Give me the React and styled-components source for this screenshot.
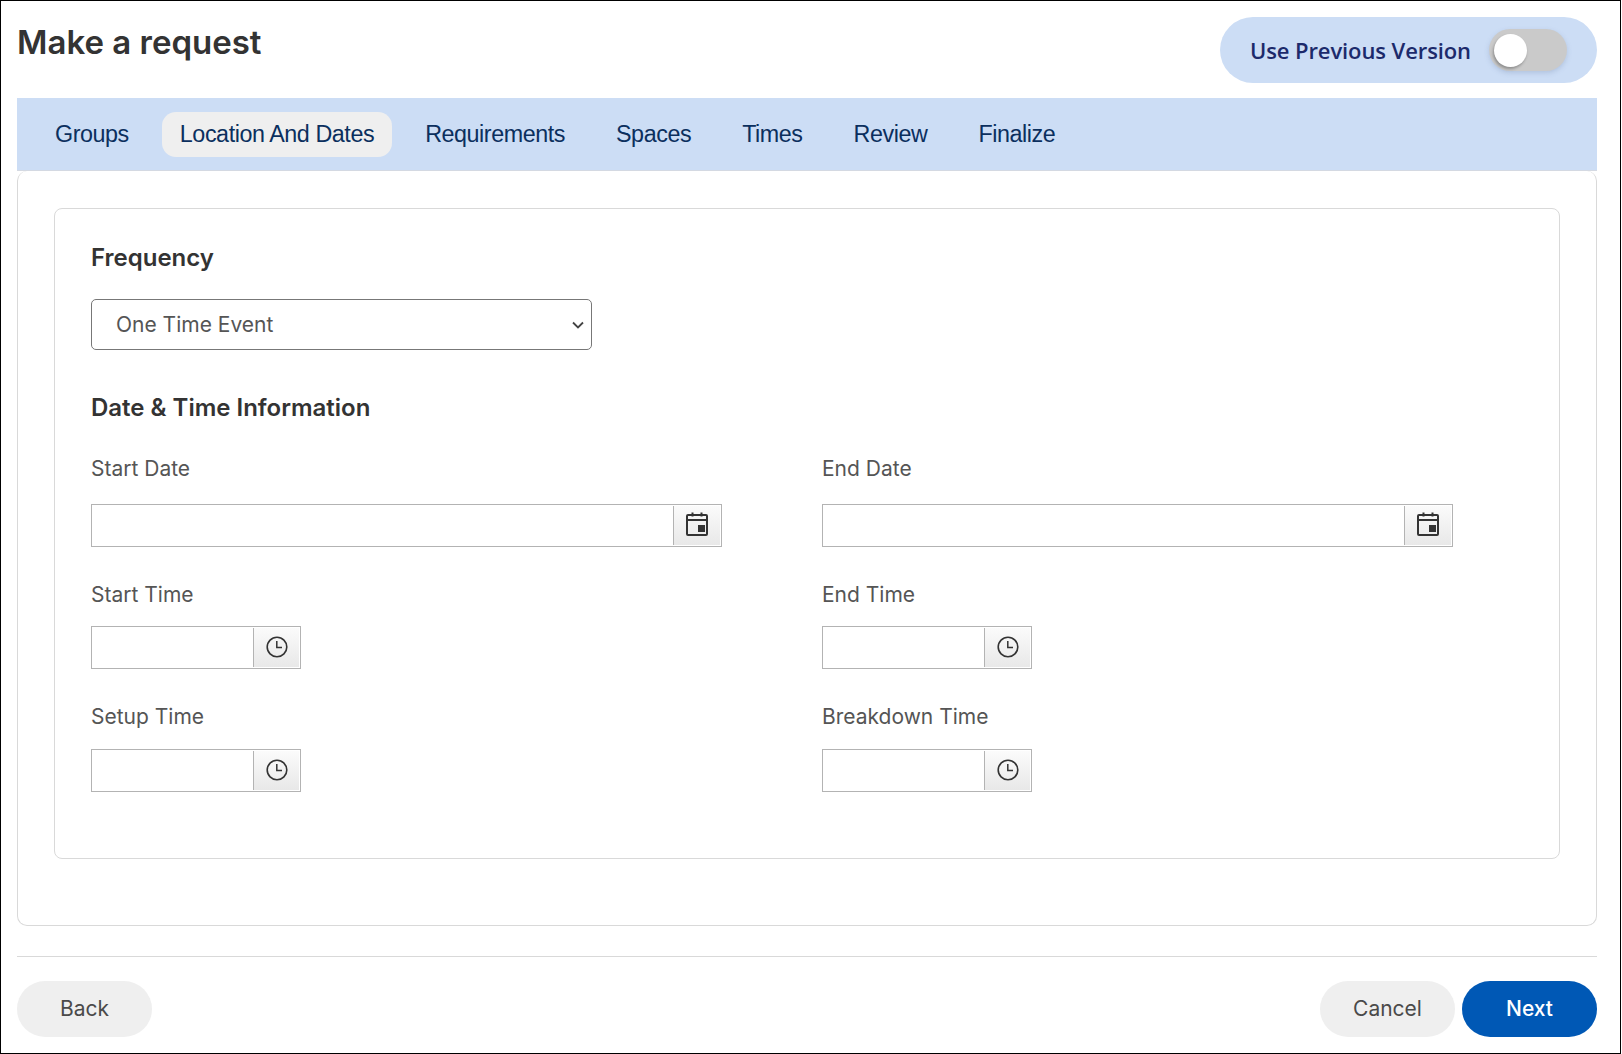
import React from 'react'
import styled, { createGlobalStyle } from 'styled-components'

const GlobalStyle = createGlobalStyle`
  html, body {
    margin: 0;
    padding: 0;
    background: #fff;
  }
  * {
    box-sizing: border-box;
  }
`

const Page = styled.div`
  width: 1621px;
  height: 1054px;
  border: 1px solid #000;
  padding: 16px 23px 0 16px;
  font-family: Inter, "Liberation Sans", sans-serif;
  color: #333;
  overflow: hidden;
`

const Header = styled.header`
  display: flex;
  justify-content: space-between;
  align-items: flex-start;
  height: 66px;
  margin-bottom: 15px;
`

const Title = styled.h1`
  margin: 0;
  font-size: 33px;
  line-height: 51px;
  font-weight: 600;
  color: #333;
`

const VersionPill = styled.div`
  display: flex;
  align-items: center;
  width: 377px;
  height: 66px;
  padding-left: 30px;
  gap: 18px;
  border-radius: 33px;
  background: #ccddf5;
`

const VersionLabel = styled.span`
  font-family: "Open Sans", sans-serif;
  font-size: 22px;
  font-weight: 600;
  letter-spacing: -0.1px;
  color: #1c2a6b;
  white-space: nowrap;
`

const Toggle = styled.span`
  display: flex;
  align-items: center;
  width: 78px;
  height: 42px;
  padding-left: 5px;
  border-radius: 21px;
  background: #cacaca;
  box-shadow: 0 2px 5px rgba(100, 120, 160, 0.25);
`

const Knob = styled.span`
  width: 33px;
  height: 33px;
  border-radius: 50%;
  background: #fff;
  box-shadow: -1px 2px 3px rgba(0, 0, 0, 0.3);
`

const TabBar = styled.nav`
  display: flex;
  align-items: center;
  gap: 15px;
  height: 73px;
  padding: 1px 20px 0;
  background: #ccddf5;
  border-bottom: 1px solid #d4d9e2;
`

const Tab = styled.div`
  height: 45px;
  padding: 0 18px;
  border-radius: 14px;
  font-family: "Liberation Sans", Arial, sans-serif;
  font-size: 23.3px;
  letter-spacing: -0.43px;
  line-height: 45px;
  color: #0b2f5e;
  background: ${(p) => (p.$active ? '#efefef' : 'transparent')};
`

const OuterCard = styled.section`
  height: 755px;
  padding: 37px 36px;
  border: 1px solid #d9d9d9;
  border-top: none;
  border-radius: 10px;
`

const InnerCard = styled.div`
  height: 651px;
  padding: 34px 36px;
  border: 1px solid #d9d9d9;
  border-radius: 8px;
`

const SectionTitle = styled.h2`
  margin: 0;
  font-size: 24px;
  line-height: 30px;
  font-weight: 600;
  color: #333;
`

const Select = styled.select`
  display: block;
  width: 501px;
  height: 51px;
  margin: 26px 0 43px;
  padding: 0 24px;
  border: 1px solid #777;
  border-radius: 5px;
  appearance: none;
  background: #fff url("data:image/svg+xml,%3Csvg xmlns='http://www.w3.org/2000/svg' width='12' height='8'%3E%3Cpath d='M1 1.5l5 5 5-5' fill='none' stroke='%23444' stroke-width='1.8'/%3E%3C/svg%3E") no-repeat right 7px center;
  font-family: Inter, sans-serif;
  font-size: 21px;
  color: #555;
`

const FieldGrid = styled.div`
  display: grid;
  grid-template-columns: 731px 631px;
  margin-top: 32px;
`

const Field = styled.div`
  display: flex;
  flex-direction: column;
  height: ${(p) => p.$height}px;
`

const Label = styled.label`
  font-size: 21px;
  line-height: 28px;
  margin-bottom: ${(p) => p.$gap}px;
  color: #555;
`

const InputGroup = styled.div`
  display: flex;
  width: ${(p) => (p.$wide ? '631px' : '210px')};
  height: 43px;
  border: 1px solid #b3b3b3;
  background: #fff;
`

const Input = styled.input`
  flex: 1;
  min-width: 0;
  border: none;
  outline: none;
  padding: 0 10px;
  background: transparent;
`

const Addon = styled.span`
  display: flex;
  align-items: center;
  justify-content: center;
  width: ${(p) => (p.$wide ? '47px' : '46px')};
  margin: 1px 1px 1px 0;
  padding-bottom: ${(p) => (p.$wide ? '3px' : '1px')};
  border-left: 1px solid #b3b3b3;
  background: linear-gradient(#fbfbfb, #e8e8e8);
`

const Footer = styled.footer`
  display: flex;
  justify-content: space-between;
  height: 81px;
  margin-top: 30px;
  padding-top: 24px;
  border-top: 1px solid #d9d9d9;
`

const ButtonRow = styled.div`
  display: flex;
  gap: 7px;
`

const Button = styled.button`
  width: 135px;
  height: 56px;
  padding: 0 0 2px;
  border: none;
  border-radius: 28px;
  font-family: Inter, sans-serif;
  font-size: 21px;
  font-weight: ${(p) => (p.$primary ? 500 : 400)};
  color: ${(p) => (p.$primary ? '#fff' : '#4a4a4a')};
  background: ${(p) => (p.$primary ? '#0058b5' : '#efefef')};
`

const CalendarIcon = () => (
  <svg width="22" height="24" viewBox="0 0 22 24" fill="none">
    <rect x="1" y="3" width="20" height="20" rx="1" stroke="#333" strokeWidth="2" />
    <path d="M1 8h20" stroke="#333" strokeWidth="2" />
    <path d="M6.5 0.5v4M15.5 0.5v4" stroke="#333" strokeWidth="2" />
    <rect x="12" y="13" width="7" height="7" fill="#333" />
  </svg>
)

const ClockIcon = () => (
  <svg width="22" height="22" viewBox="0 0 22 22" fill="none">
    <circle cx="11" cy="11" r="9.8" stroke="#333" strokeWidth="1.6" />
    <path d="M10.8 5v6.6h5.2" stroke="#333" strokeWidth="1.5" />
  </svg>
)

const tabs = ['Groups', 'Location And Dates', 'Requirements', 'Spaces', 'Times', 'Review', 'Finalize']

const rows = [
  { left: 'Start Date', right: 'End Date', wide: true, height: 126, gap: 21 },
  { left: 'Start Time', right: 'End Time', height: 122, gap: 17 },
  { left: 'Setup Time', right: 'Breakdown Time', height: 110, gap: 18 },
]

const DateField = ({ label, wide, height, gap }) => (
  <Field $height={height}>
    <Label $gap={gap}>{label}</Label>
    <InputGroup $wide={wide}>
      <Input type="text" aria-label={label} />
      <Addon $wide={wide}>{wide ? <CalendarIcon /> : <ClockIcon />}</Addon>
    </InputGroup>
  </Field>
)

export default function App() {
  return (
    <Page>
      <GlobalStyle />
      <Header>
        <Title>Make a request</Title>
        <VersionPill>
          <VersionLabel>Use Previous Version</VersionLabel>
          <Toggle>
            <Knob />
          </Toggle>
        </VersionPill>
      </Header>
      <TabBar>
        {tabs.map((tab) => (
          <Tab key={tab} $active={tab === 'Location And Dates'}>
            {tab}
          </Tab>
        ))}
      </TabBar>
      <OuterCard>
        <InnerCard>
          <SectionTitle>Frequency</SectionTitle>
          <Select defaultValue="One Time Event">
            <option>One Time Event</option>
          </Select>
          <SectionTitle>Date &amp; Time Information</SectionTitle>
          <FieldGrid>
            {rows.map((row) => (
              <React.Fragment key={row.left}>
                <DateField label={row.left} wide={row.wide} height={row.height} gap={row.gap} />
                <DateField label={row.right} wide={row.wide} height={row.height} gap={row.gap} />
              </React.Fragment>
            ))}
          </FieldGrid>
        </InnerCard>
      </OuterCard>
      <Footer>
        <Button>Back</Button>
        <ButtonRow>
          <Button>Cancel</Button>
          <Button $primary>Next</Button>
        </ButtonRow>
      </Footer>
    </Page>
  )
}
